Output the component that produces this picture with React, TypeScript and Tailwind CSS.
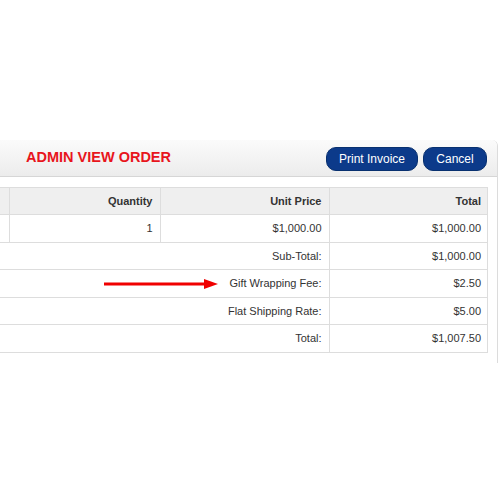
export default function App() {
  const font = { fontFamily: '"Liberation Sans", Arial, sans-serif' }
  const totals = [
    { label: 'Sub-Total:', value: '$1,000.00', h: 'h-[27px]' },
    { label: 'Gift Wrapping Fee:', value: '$2.50', h: 'h-[28px]', arrow: true },
    { label: 'Flat Shipping Rate:', value: '$5.00', h: 'h-[27px]' },
    { label: 'Total:', value: '$1,007.50', h: 'h-[28px]' },
  ]

  return (
    <div className="w-[500px] h-[500px] bg-white pt-[140px] overflow-hidden" style={font}>
      <div className="w-[498px] border-r border-[#dcdcdc] rounded-tr-[6px] pb-[10px]">
        {/* Header */}
        <div className="h-[37px] flex items-center justify-between pl-[26px] pr-[10px] rounded-tr-[6px] bg-gradient-to-b from-[#fbfbfb] to-[#ececec] border-b border-[#d6d6d6]">
          <h1 className="text-[14.5px] font-bold text-[#e8151c]">ADMIN VIEW ORDER</h1>
          <div className="flex items-center gap-[5px] mt-[2px]">
            <button className="h-[24px] w-[92px] rounded-[10px] bg-[#0c3a8a] border border-[#08306f] text-white text-[12px]">Print Invoice</button>
            <button className="h-[24px] w-[64px] rounded-[10px] bg-[#0c3a8a] border border-[#08306f] text-white text-[12px]">Cancel</button>
          </div>
        </div>

        {/* Table */}
        <div className="pt-[10px] pr-[9px]">
          <table className="w-full border-collapse text-[11px] text-[#333]">
            <tbody>
              <tr className="h-[27px] bg-[#efefef]">
                <td className="w-[9px] border-y border-r border-[#dddddd]"></td>
                <td className="w-[151px] border border-[#dddddd] text-right pr-[7px] font-bold">Quantity</td>
                <td className="w-[169px] border border-[#dddddd] text-right pr-[7px] font-bold">Unit Price</td>
                <td className="border border-[#dddddd] text-right pr-[6px] font-bold">Total</td>
              </tr>
              <tr className="h-[28px]">
                <td className="border-y border-r border-[#dddddd]"></td>
                <td className="border border-[#dddddd] text-right pr-[7px]">1</td>
                <td className="border border-[#dddddd] text-right pr-[7px]">$1,000.00</td>
                <td className="border border-[#dddddd] text-right pr-[6px]">$1,000.00</td>
              </tr>
              {totals.map((t, i) => (
                <tr key={i} className={t.h}>
                  <td colSpan={3} className="border-y border-r border-[#dddddd] pr-[7px]">
                    <div className="flex items-center justify-end">
                      {t.arrow && (
                        <svg width="114" height="10" viewBox="0 0 114 10" className="mr-[11px]">
                          <rect x="0" y="3.5" width="102" height="3" fill="#f00000" />
                          <polygon points="100,0 114,5 100,10" fill="#f00000" />
                        </svg>
                      )}
                      <span>{t.label}</span>
                    </div>
                  </td>
                  <td className="border border-[#dddddd] text-right pr-[6px]">{t.value}</td>
                </tr>
              ))}
            </tbody>
          </table>
        </div>
      </div>
    </div>
  )
}
